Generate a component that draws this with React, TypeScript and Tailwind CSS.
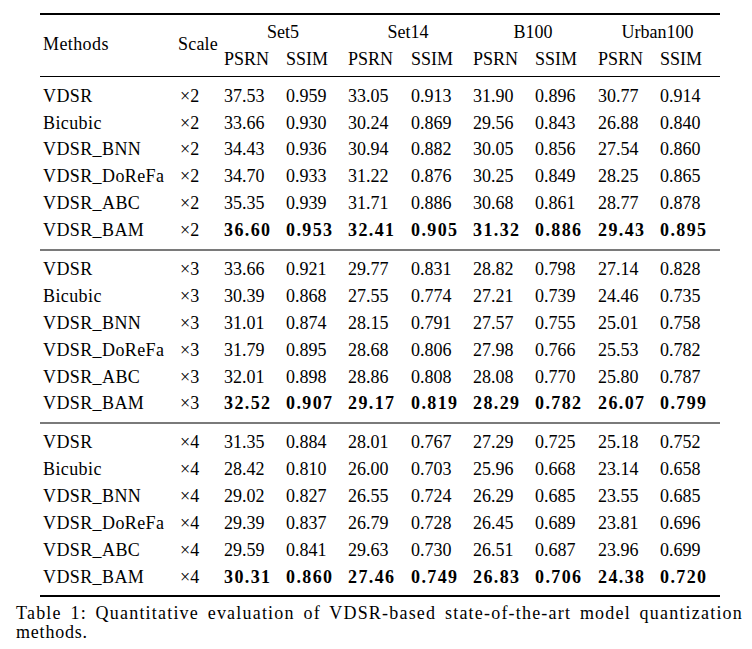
const cols = "grid grid-cols-[138px_46px_62px_62px_63px_62px_62px_63px_62px_60px]";

const groups = [
  {
    scale: "2",
    rows: [
      ["VDSR", "37.53", "0.959", "33.05", "0.913", "31.90", "0.896", "30.77", "0.914"],
      ["Bicubic", "33.66", "0.930", "30.24", "0.869", "29.56", "0.843", "26.88", "0.840"],
      ["VDSR_BNN", "34.43", "0.936", "30.94", "0.882", "30.05", "0.856", "27.54", "0.860"],
      ["VDSR_DoReFa", "34.70", "0.933", "31.22", "0.876", "30.25", "0.849", "28.25", "0.865"],
      ["VDSR_ABC", "35.35", "0.939", "31.71", "0.886", "30.68", "0.861", "28.77", "0.878"],
      ["VDSR_BAM", "36.60", "0.953", "32.41", "0.905", "31.32", "0.886", "29.43", "0.895"],
    ],
  },
  {
    scale: "3",
    rows: [
      ["VDSR", "33.66", "0.921", "29.77", "0.831", "28.82", "0.798", "27.14", "0.828"],
      ["Bicubic", "30.39", "0.868", "27.55", "0.774", "27.21", "0.739", "24.46", "0.735"],
      ["VDSR_BNN", "31.01", "0.874", "28.15", "0.791", "27.57", "0.755", "25.01", "0.758"],
      ["VDSR_DoReFa", "31.79", "0.895", "28.68", "0.806", "27.98", "0.766", "25.53", "0.782"],
      ["VDSR_ABC", "32.01", "0.898", "28.86", "0.808", "28.08", "0.770", "25.80", "0.787"],
      ["VDSR_BAM", "32.52", "0.907", "29.17", "0.819", "28.29", "0.782", "26.07", "0.799"],
    ],
  },
  {
    scale: "4",
    rows: [
      ["VDSR", "31.35", "0.884", "28.01", "0.767", "27.29", "0.725", "25.18", "0.752"],
      ["Bicubic", "28.42", "0.810", "26.00", "0.703", "25.96", "0.668", "23.14", "0.658"],
      ["VDSR_BNN", "29.02", "0.827", "26.55", "0.724", "26.29", "0.685", "23.55", "0.685"],
      ["VDSR_DoReFa", "29.39", "0.837", "26.79", "0.728", "26.45", "0.689", "23.81", "0.696"],
      ["VDSR_ABC", "29.59", "0.841", "29.63", "0.730", "26.51", "0.687", "23.96", "0.699"],
      ["VDSR_BAM", "30.31", "0.860", "27.46", "0.749", "26.83", "0.706", "24.38", "0.720"],
    ],
  },
];

function Header() {
  return (
    <div className={`${cols} grid-rows-[26.6px_26.6px] pt-[4px] pb-[4px]`}>
      <div className="row-span-2 flex items-center pl-[3px] pb-[3px] tracking-[0.4px]">Methods</div>
      <div className="row-span-2 flex items-center pb-[3px] tracking-[0.2px]">Scale</div>
      <div className="col-span-2 flex items-center justify-center pr-[6px]">Set5</div>
      <div className="col-span-2 flex items-center justify-center pr-[5px]">Set14</div>
      <div className="col-span-2 flex items-center justify-center pr-[5px]">B100</div>
      <div className="col-span-2 flex items-center justify-center pr-[3px]">Urban100</div>
      {["PSRN", "SSIM", "PSRN", "SSIM", "PSRN", "SSIM", "PSRN", "SSIM"].map((t, i) => (
        <div key={i} className="flex items-center">{t}</div>
      ))}
    </div>
  );
}

function Group({ scale, rows }: { scale: string; rows: string[][] }) {
  return (
    <div className="pt-[5px] pb-[5px]">
      {rows.map((r, i) => {
        const best = i === rows.length - 1;
        return (
          <div key={i} className={`${cols} h-[26.9px] items-center`}>
            <div className="pl-[3px] tracking-[0.4px] whitespace-nowrap">{r[0]}</div>
            <div className="pl-[2px]">×{scale}</div>
            {r.slice(1).map((v, j) => (
              <div key={j} className={best ? "font-bold tracking-[1.4px]" : ""}>
                {v}
              </div>
            ))}
          </div>
        );
      })}
    </div>
  );
}

export default function App() {
  return (
    <div className="w-[752px] h-[649px] bg-white text-black font-[Liberation_Serif,serif] text-[18px] leading-none pt-[13px] overflow-hidden">
      <div className="ml-[40px] w-[680px]">
        <div className="h-[2px] bg-black" />
        <Header />
        <div className="h-[1px] bg-black" />
        <Group {...groups[0]} />
        <div className="h-[2px] bg-[#7a7a7a]" />
        <Group {...groups[1]} />
        <div className="h-[2px] bg-[#7a7a7a]" />
        <Group {...groups[2]} />
        <div className="h-[2px] bg-black" />
      </div>
      <div className="ml-[16px] w-[727px] mt-[7px] leading-[19px]">
        <div className="text-justify [text-align-last:justify] whitespace-nowrap tracking-[1.2px]">
          Table 1: Quantitative evaluation of VDSR-based state-of-the-art model quantization
        </div>
        <div className="tracking-[0.8px]">methods.</div>
      </div>
    </div>
  );
}
